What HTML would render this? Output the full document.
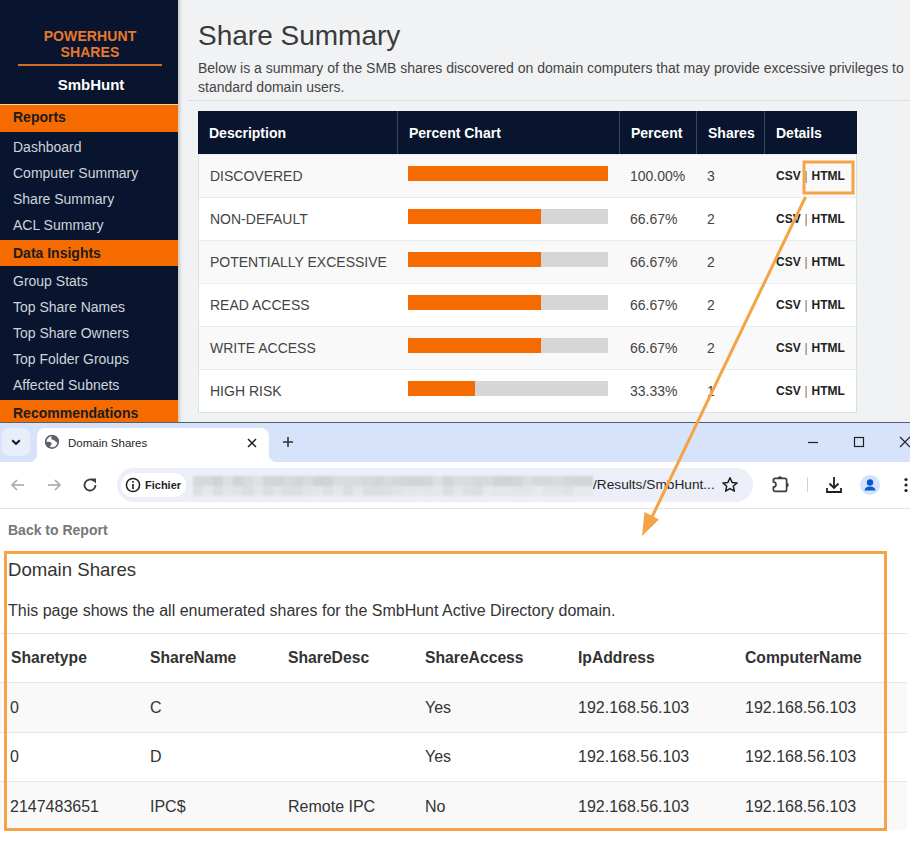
<!DOCTYPE html>
<html><head><meta charset="utf-8">
<style>
*{margin:0;padding:0;box-sizing:border-box}
html,body{width:910px;height:844px;overflow:hidden;background:#fff;font-family:"Liberation Sans",sans-serif}
.abs{position:absolute}
#top{position:absolute;left:0;top:0;width:910px;height:423px;background:#f1f2f4;overflow:hidden}
#side{position:absolute;left:0;top:0;width:178px;height:423px;background:#09152e}
#side .brand{position:absolute;left:1px;width:178px;letter-spacing:0.1px;text-align:center;color:#e8782a;font-weight:bold;font-size:14px;line-height:16px}
#side .hr{position:absolute;left:18px;top:64px;width:144px;height:2px;background:#cf6f2e}
#side .dom{position:absolute;left:2px;top:76px;width:178px;text-align:center;color:#fff;font-weight:bold;font-size:15px;line-height:18px}
#side .sec{position:absolute;left:0;width:178px;height:28px;background:#f56b00;color:#1c1c1c;font-weight:bold;font-size:14px;padding-left:13px;line-height:28px}
#side .it{position:absolute;left:13px;color:#cfd4dc;font-size:14px;line-height:18px;white-space:nowrap}
#shadow{position:absolute;left:178px;top:0;width:6px;height:422px;background:linear-gradient(to right,#c6c7c9 0,#dedfe1 2px,#eeeff1 4px,#f1f2f4 6px)}
h1{position:absolute;left:198px;top:19px;font-size:28px;font-weight:normal;color:#3a3a3a;line-height:34px;white-space:nowrap}
.desc{position:absolute;left:198px;top:59px;font-size:14px;color:#444;line-height:19px;width:720px}
.hline{position:absolute;left:188px;top:100px;width:722px;height:1px;background:#dcdcdc}
#tbl{position:absolute;left:198px;top:111px;width:659px;height:302px;background:#fff;border-bottom:1px solid #d6e4e2}
.th{position:absolute;top:0;height:43px;background:#09152e;color:#fff;font-weight:bold;font-size:14px;line-height:43px;padding-top:1px;padding-left:11px;border-left:1px solid #3a4656}
.row{position:absolute;left:0;width:659px;height:43px;border-top:1px solid #e8eeee;border-left:1px solid #d6e4e2;border-right:1px solid #d6e4e2}
.cell{position:absolute;top:0;line-height:42px;font-size:14px;color:#444;white-space:nowrap}
.bar{position:absolute;left:209px;top:11px;width:200px;height:15px;background:#d6d6d6}
.bar i{display:block;height:15px;background:#f56b00}
.det{font-weight:bold;font-size:12px;color:#222}

#br{position:absolute;left:0;top:422px;width:910px;height:422px;background:#fff;overflow:hidden}
#tabs{position:absolute;left:0;top:1px;width:910px;height:39px;background:#d6e3fa}
#tline{position:absolute;left:0;top:0;width:910px;height:1px;background:#585e69}
.ico{position:absolute}
#tool{position:absolute;left:0;top:40px;width:910px;height:47px;background:#fff;border-bottom:1px solid #e3e3e3}
#pill{position:absolute;left:117px;top:6px;width:636px;height:34px;border-radius:17px;background:#eceff7}
#chip{position:absolute;left:4px;top:5px;width:65px;height:24px;border-radius:12px;background:#fff}
.pg{position:absolute;color:#333;white-space:nowrap}
#bt{position:absolute;left:0;width:907px}
.brow{position:absolute;left:0;width:907px;border-top:1px solid #e6e6e6}
.bc{position:absolute;font-size:16px;color:#333;white-space:nowrap}
</style></head><body>
<div id="top">
  <div id="side">
    <div class="brand" style="top:28px">POWERHUNT</div>
    <div class="brand" style="top:44px">SHARES</div>
    <div class="hr"></div>
    <div class="dom">SmbHunt</div>
    <div class="sec" style="top:104px;border-top:1px solid #f7d7a8;line-height:25px">Reports</div>
    <div class="it" style="top:138px">Dashboard</div>
    <div class="it" style="top:164px">Computer Summary</div>
    <div class="it" style="top:190px">Share Summary</div>
    <div class="it" style="top:216px">ACL Summary</div>
    <div class="sec" style="top:240px;height:26px;line-height:26px">Data Insights</div>
    <div class="it" style="top:272px">Group Stats</div>
    <div class="it" style="top:298px">Top Share Names</div>
    <div class="it" style="top:324px">Top Share Owners</div>
    <div class="it" style="top:350px">Top Folder Groups</div>
    <div class="it" style="top:376px">Affected Subnets</div>
    <div class="sec" style="top:400px;height:23px;line-height:26px">Recommendations</div>
  </div>
  <div id="shadow"></div>
  <h1>Share Summary</h1>
  <div class="desc">Below is a summary of the SMB shares discovered on domain computers that may provide excessive privileges to standard domain users.</div>
  <div class="hline"></div>
  <div id="tbl">
    <div class="th" style="left:0;width:199px;border-left:none">Description</div>
    <div class="th" style="left:199px;width:222px">Percent Chart</div>
    <div class="th" style="left:421px;width:77px">Percent</div>
    <div class="th" style="left:498px;width:68px">Shares</div>
    <div class="th" style="left:566px;width:93px">Details</div>
    <div class="row" style="top:43px;background:#f9f9f9">
      <div class="cell" style="left:11px">DISCOVERED</div>
      <div class="bar"><i style="width:200px"></i></div>
      <div class="cell" style="left:431px">100.00%</div>
      <div class="cell" style="left:508px">3</div>
      <div class="cell det" style="left:577px">CSV <span style="font-weight:normal;color:#8a6a48;padding:0 0.5px">|</span> HTML</div>
    </div>
    <div class="row" style="top:86px;background:#fff">
      <div class="cell" style="left:11px">NON-DEFAULT</div>
      <div class="bar"><i style="width:133px"></i></div>
      <div class="cell" style="left:431px">66.67%</div>
      <div class="cell" style="left:508px">2</div>
      <div class="cell det" style="left:577px">CSV <span style="font-weight:normal;color:#8a6a48;padding:0 0.5px">|</span> HTML</div>
    </div>
    <div class="row" style="top:129px;background:#f9f9f9">
      <div class="cell" style="left:11px">POTENTIALLY EXCESSIVE</div>
      <div class="bar"><i style="width:133px"></i></div>
      <div class="cell" style="left:431px">66.67%</div>
      <div class="cell" style="left:508px">2</div>
      <div class="cell det" style="left:577px">CSV <span style="font-weight:normal;color:#8a6a48;padding:0 0.5px">|</span> HTML</div>
    </div>
    <div class="row" style="top:172px;background:#fff">
      <div class="cell" style="left:11px">READ ACCESS</div>
      <div class="bar"><i style="width:133px"></i></div>
      <div class="cell" style="left:431px">66.67%</div>
      <div class="cell" style="left:508px">2</div>
      <div class="cell det" style="left:577px">CSV <span style="font-weight:normal;color:#8a6a48;padding:0 0.5px">|</span> HTML</div>
    </div>
    <div class="row" style="top:215px;background:#f9f9f9">
      <div class="cell" style="left:11px">WRITE ACCESS</div>
      <div class="bar"><i style="width:133px"></i></div>
      <div class="cell" style="left:431px">66.67%</div>
      <div class="cell" style="left:508px">2</div>
      <div class="cell det" style="left:577px">CSV <span style="font-weight:normal;color:#8a6a48;padding:0 0.5px">|</span> HTML</div>
    </div>
    <div class="row" style="top:258px;background:#fff">
      <div class="cell" style="left:11px">HIGH RISK</div>
      <div class="bar"><i style="width:67px"></i></div>
      <div class="cell" style="left:431px">33.33%</div>
      <div class="cell" style="left:508px">1</div>
      <div class="cell det" style="left:577px">CSV <span style="font-weight:normal;color:#8a6a48;padding:0 0.5px">|</span> HTML</div>
    </div>
  </div>
</div>
<div id="br">
  <div id="tline"></div>
  <div id="tabs">
    <div class="ico" style="left:2px;top:5px;width:28px;height:28px;border-radius:8px;background:#e9effa"></div>
    <svg class="ico" style="left:9px;top:12px" width="14" height="14" viewBox="0 0 14 14"><path d="M3.2 5.2 L7 8.8 L10.8 5.2" fill="none" stroke="#0f1a2e" stroke-width="2"/></svg>
    <div class="ico" style="left:37px;top:5px;width:232px;height:34px;border-radius:8px 8px 0 0;background:#fff"></div>
    <div class="ico" style="left:29px;top:31px;width:8px;height:8px;background:radial-gradient(circle at 0 0,#d6e3fa 8px,#fff 8.5px)"></div>
    <div class="ico" style="left:269px;top:31px;width:8px;height:8px;background:radial-gradient(circle at 8px 0,#d6e3fa 8px,#fff 8.5px)"></div>
    <svg class="ico" style="left:44px;top:11px" width="16" height="16" viewBox="0 0 16 16"><circle cx="8" cy="7.8" r="6.3" fill="none" stroke="#5f6368" stroke-width="1.7"/><path d="M8.6 1.6 C7.6 2.7 7 3.9 7.3 5.1 C7.9 6 9.4 5.9 10.4 6.6 C11.4 7.3 11.8 8.3 12.6 8.4 L14.6 8 L14.6 5 L12 2.2 Z" fill="#5f6368"/><path d="M1.4 8.2 C3.4 7.7 6 7.7 7.3 8.6 C8 9.4 7.6 10.7 6.6 11.5 C6 12.2 6 13.4 6.3 14.4 L3 13 L1.4 10.5 Z" fill="#5f6368"/></svg>
    <div class="pg" style="left:68px;top:13px;font-size:11.5px;line-height:14px;color:#1f1f1f">Domain Shares</div>
    <svg class="ico" style="left:247px;top:15px" width="10" height="10" viewBox="0 0 10 10"><path d="M1 1 L9 9 M9 1 L1 9" stroke="#1f1f1f" stroke-width="1.5"/></svg>
    <svg class="ico" style="left:282px;top:13px" width="12" height="12" viewBox="0 0 12 12"><path d="M6 1 V11 M1 6 H11" stroke="#333" stroke-width="1.6"/></svg>
    <svg class="ico" style="left:807px;top:13px" width="12" height="12" viewBox="0 0 12 12"><path d="M1 6.5 H11" stroke="#1f1f1f" stroke-width="1.2"/></svg>
    <svg class="ico" style="left:853px;top:13px" width="12" height="12" viewBox="0 0 12 12"><rect x="1.5" y="1.5" width="9" height="9" fill="none" stroke="#1f1f1f" stroke-width="1.2"/></svg>
    <svg class="ico" style="left:899px;top:13px" width="12" height="12" viewBox="0 0 12 12"><path d="M1 1 L11 11 M11 1 L1 11" stroke="#1f1f1f" stroke-width="1.2"/></svg>
  </div>
  <div id="tool">
    <svg class="ico" style="left:10px;top:15px" width="16" height="16" viewBox="0 0 16 16"><path d="M14 8 H2.5 M7 3 L2 8 L7 13" fill="none" stroke="#a3a6aa" stroke-width="1.5"/></svg>
    <svg class="ico" style="left:46px;top:15px" width="16" height="16" viewBox="0 0 16 16"><path d="M2 8 H13.5 M9 3 L14 8 L9 13" fill="none" stroke="#a3a6aa" stroke-width="1.5"/></svg>
    <svg class="ico" style="left:82px;top:15px" width="16" height="16" viewBox="0 0 16 16"><path d="M13.5 8 A5.5 5.5 0 1 1 11.9 4.1" fill="none" stroke="#3c3c3c" stroke-width="1.8"/><path d="M9 1.5 H14 V6.5 Z" fill="#3c3c3c"/></svg>
    <div id="pill">
      <div id="chip"></div>
      <svg class="ico" style="left:8px;top:9px" width="16" height="16" viewBox="0 0 16 16"><circle cx="8" cy="8" r="6.6" fill="none" stroke="#1f1f1f" stroke-width="1.5"/><rect x="7.2" y="7" width="1.6" height="5" fill="#1f1f1f"/><rect x="7.2" y="4" width="1.6" height="1.7" fill="#1f1f1f"/></svg>
      <div class="pg" style="left:28px;top:10px;font-size:12px;line-height:14px;font-weight:bold;color:#1f1f1f;font-size:11px">Fichier</div>
      <div class="ico" style="left:76px;top:8px;width:400px;height:20px;filter:blur(1px)"><div class="ico" style="left:0px;top:0px;width:10px;height:10px;background:rgb(213,215,219)"></div><div class="ico" style="left:0px;top:10px;width:10px;height:10px;background:rgb(222,223,227)"></div><div class="ico" style="left:10px;top:0px;width:10px;height:10px;background:rgb(214,216,220)"></div><div class="ico" style="left:10px;top:10px;width:10px;height:10px;background:rgb(230,231,235)"></div><div class="ico" style="left:20px;top:0px;width:10px;height:10px;background:rgb(208,210,214)"></div><div class="ico" style="left:20px;top:10px;width:10px;height:10px;background:rgb(221,222,226)"></div><div class="ico" style="left:30px;top:0px;width:10px;height:10px;background:rgb(221,223,227)"></div><div class="ico" style="left:30px;top:10px;width:10px;height:10px;background:rgb(228,229,233)"></div><div class="ico" style="left:40px;top:0px;width:10px;height:10px;background:rgb(209,211,215)"></div><div class="ico" style="left:40px;top:10px;width:10px;height:10px;background:rgb(225,226,230)"></div><div class="ico" style="left:50px;top:0px;width:10px;height:10px;background:rgb(217,219,223)"></div><div class="ico" style="left:50px;top:10px;width:10px;height:10px;background:rgb(220,221,225)"></div><div class="ico" style="left:60px;top:0px;width:10px;height:10px;background:rgb(222,224,228)"></div><div class="ico" style="left:60px;top:10px;width:10px;height:10px;background:rgb(228,229,233)"></div><div class="ico" style="left:70px;top:0px;width:10px;height:10px;background:rgb(211,213,217)"></div><div class="ico" style="left:70px;top:10px;width:10px;height:10px;background:rgb(220,221,225)"></div><div class="ico" style="left:80px;top:0px;width:10px;height:10px;background:rgb(209,211,215)"></div><div class="ico" style="left:80px;top:10px;width:10px;height:10px;background:rgb(226,227,231)"></div><div class="ico" style="left:90px;top:0px;width:10px;height:10px;background:rgb(214,216,220)"></div><div class="ico" style="left:90px;top:10px;width:10px;height:10px;background:rgb(221,222,226)"></div><div class="ico" style="left:100px;top:0px;width:10px;height:10px;background:rgb(211,213,217)"></div><div class="ico" style="left:100px;top:10px;width:10px;height:10px;background:rgb(221,222,226)"></div><div class="ico" style="left:110px;top:0px;width:10px;height:10px;background:rgb(216,218,222)"></div><div class="ico" style="left:110px;top:10px;width:10px;height:10px;background:rgb(226,227,231)"></div><div class="ico" style="left:120px;top:0px;width:10px;height:10px;background:rgb(208,210,214)"></div><div class="ico" style="left:120px;top:10px;width:10px;height:10px;background:rgb(229,230,234)"></div><div class="ico" style="left:130px;top:0px;width:10px;height:10px;background:rgb(209,211,215)"></div><div class="ico" style="left:130px;top:10px;width:10px;height:10px;background:rgb(223,224,228)"></div><div class="ico" style="left:140px;top:0px;width:10px;height:10px;background:rgb(218,220,224)"></div><div class="ico" style="left:140px;top:10px;width:10px;height:10px;background:rgb(230,231,235)"></div><div class="ico" style="left:150px;top:0px;width:10px;height:10px;background:rgb(217,219,223)"></div><div class="ico" style="left:150px;top:10px;width:10px;height:10px;background:rgb(220,221,225)"></div><div class="ico" style="left:160px;top:0px;width:10px;height:10px;background:rgb(217,219,223)"></div><div class="ico" style="left:160px;top:10px;width:10px;height:10px;background:rgb(229,230,234)"></div><div class="ico" style="left:170px;top:0px;width:10px;height:10px;background:rgb(214,216,220)"></div><div class="ico" style="left:170px;top:10px;width:10px;height:10px;background:rgb(220,221,225)"></div><div class="ico" style="left:180px;top:0px;width:10px;height:10px;background:rgb(211,213,217)"></div><div class="ico" style="left:180px;top:10px;width:10px;height:10px;background:rgb(220,221,225)"></div><div class="ico" style="left:190px;top:0px;width:10px;height:10px;background:rgb(216,218,222)"></div><div class="ico" style="left:190px;top:10px;width:10px;height:10px;background:rgb(222,223,227)"></div><div class="ico" style="left:200px;top:0px;width:10px;height:10px;background:rgb(212,214,218)"></div><div class="ico" style="left:200px;top:10px;width:10px;height:10px;background:rgb(226,227,231)"></div><div class="ico" style="left:210px;top:0px;width:10px;height:10px;background:rgb(210,212,216)"></div><div class="ico" style="left:210px;top:10px;width:10px;height:10px;background:rgb(228,229,233)"></div><div class="ico" style="left:220px;top:0px;width:10px;height:10px;background:rgb(209,211,215)"></div><div class="ico" style="left:220px;top:10px;width:10px;height:10px;background:rgb(229,230,234)"></div><div class="ico" style="left:230px;top:0px;width:10px;height:10px;background:rgb(212,214,218)"></div><div class="ico" style="left:230px;top:10px;width:10px;height:10px;background:rgb(228,229,233)"></div><div class="ico" style="left:240px;top:0px;width:10px;height:10px;background:rgb(221,223,227)"></div><div class="ico" style="left:240px;top:10px;width:10px;height:10px;background:rgb(230,231,235)"></div><div class="ico" style="left:250px;top:0px;width:10px;height:10px;background:rgb(210,212,216)"></div><div class="ico" style="left:250px;top:10px;width:10px;height:10px;background:rgb(221,222,226)"></div><div class="ico" style="left:260px;top:0px;width:10px;height:10px;background:rgb(217,219,223)"></div><div class="ico" style="left:260px;top:10px;width:10px;height:10px;background:rgb(229,230,234)"></div><div class="ico" style="left:270px;top:0px;width:10px;height:10px;background:rgb(218,220,224)"></div><div class="ico" style="left:270px;top:10px;width:10px;height:10px;background:rgb(223,224,228)"></div><div class="ico" style="left:280px;top:0px;width:10px;height:10px;background:rgb(213,215,219)"></div><div class="ico" style="left:280px;top:10px;width:10px;height:10px;background:rgb(221,222,226)"></div><div class="ico" style="left:290px;top:0px;width:10px;height:10px;background:rgb(216,218,222)"></div><div class="ico" style="left:290px;top:10px;width:10px;height:10px;background:rgb(231,232,236)"></div><div class="ico" style="left:300px;top:0px;width:10px;height:10px;background:rgb(209,211,215)"></div><div class="ico" style="left:300px;top:10px;width:10px;height:10px;background:rgb(229,230,234)"></div><div class="ico" style="left:310px;top:0px;width:10px;height:10px;background:rgb(208,210,214)"></div><div class="ico" style="left:310px;top:10px;width:10px;height:10px;background:rgb(229,230,234)"></div><div class="ico" style="left:320px;top:0px;width:10px;height:10px;background:rgb(211,213,217)"></div><div class="ico" style="left:320px;top:10px;width:10px;height:10px;background:rgb(227,228,232)"></div><div class="ico" style="left:330px;top:0px;width:10px;height:10px;background:rgb(218,220,224)"></div><div class="ico" style="left:330px;top:10px;width:10px;height:10px;background:rgb(228,229,233)"></div><div class="ico" style="left:340px;top:0px;width:10px;height:10px;background:rgb(214,216,220)"></div><div class="ico" style="left:340px;top:10px;width:10px;height:10px;background:rgb(232,233,237)"></div><div class="ico" style="left:350px;top:0px;width:10px;height:10px;background:rgb(213,215,219)"></div><div class="ico" style="left:350px;top:10px;width:10px;height:10px;background:rgb(227,228,232)"></div><div class="ico" style="left:360px;top:0px;width:10px;height:10px;background:rgb(217,219,223)"></div><div class="ico" style="left:360px;top:10px;width:10px;height:10px;background:rgb(227,228,232)"></div><div class="ico" style="left:370px;top:0px;width:10px;height:10px;background:rgb(213,215,219)"></div><div class="ico" style="left:370px;top:10px;width:10px;height:10px;background:rgb(224,225,229)"></div><div class="ico" style="left:380px;top:0px;width:10px;height:10px;background:rgb(211,213,217)"></div><div class="ico" style="left:380px;top:10px;width:10px;height:10px;background:rgb(232,233,237)"></div><div class="ico" style="left:390px;top:0px;width:10px;height:10px;background:rgb(210,212,216)"></div><div class="ico" style="left:390px;top:10px;width:10px;height:10px;background:rgb(231,232,236)"></div></div>
      
      <div class="pg" style="left:476px;top:9px;font-size:13.7px;line-height:16px;color:#1f1f1f">/Results/SmbHunt...</div>
      <svg class="ico" style="left:604px;top:8px" width="18" height="18" viewBox="0 0 18 18"><path d="M9 1.8 L11.1 6.4 L16.1 6.9 L12.3 10.2 L13.4 15.2 L9 12.6 L4.6 15.2 L5.7 10.2 L1.9 6.9 L6.9 6.4 Z" fill="none" stroke="#1f1f1f" stroke-width="1.5" stroke-linejoin="round"/></svg>
    </div>
    <svg class="ico" style="left:772px;top:13px" width="18" height="18" viewBox="0 0 18 18"><path d="M3.1 3.3 H12.9 Q14.6 3.3 14.6 5 V14.7 Q14.6 16.4 12.9 16.4 H3.1 Q1.4 16.4 1.4 14.7 V12.2 A2.6 2.6 0 0 0 1.4 7 V5 Q1.4 3.3 3.1 3.3 Z" fill="none" stroke="#3c3c3c" stroke-width="1.7"/><path d="M5.7 3.4 A2.2 2.2 0 0 1 10.1 3.4 Z M14.5 7.7 A2.2 2.2 0 0 1 14.5 12.1 Z" fill="#3c3c3c"/></svg>
    <div class="ico" style="left:807px;top:15px;width:1px;height:15px;background:#c7d3e6"></div>
    <svg class="ico" style="left:824px;top:13px" width="20" height="20" viewBox="0 0 20 20"><path d="M10 2 V13 M5.5 8.5 L10 13 L14.5 8.5 M3 13 V17 H17 V13" fill="none" stroke="#1f1f1f" stroke-width="1.8"/></svg>
    <div class="ico" style="left:860px;top:13px;width:20px;height:20px;border-radius:10px;background:#d3e3fd"></div>
    <svg class="ico" style="left:860px;top:13px" width="20" height="20" viewBox="0 0 20 20"><circle cx="10" cy="7.5" r="3.2" fill="#0b57d0"/><path d="M4.5 15.5 C5 12 8 11.5 10 11.5 C12 11.5 15 12 15.5 15.5 Z" fill="#0b57d0"/></svg>
    <svg class="ico" style="left:901px;top:13px" width="10" height="20" viewBox="0 0 10 20"><circle cx="5" cy="4.5" r="1.6" fill="#1f1f1f"/><circle cx="5" cy="10" r="1.6" fill="#1f1f1f"/><circle cx="5" cy="15.5" r="1.6" fill="#1f1f1f"/></svg>
  </div>
  <div class="pg" style="left:8px;top:100px;font-size:14px;line-height:16px;font-weight:bold;color:#777">Back to Report</div>
  <div class="pg" style="left:8px;top:137px;font-size:18.6px;line-height:22px;color:#333">Domain Shares</div>
  <div class="pg" style="left:8px;top:179px;font-size:16px;line-height:20px;color:#333">This page shows the all enumerated shares for the SmbHunt Active Directory domain.</div>
  <div class="brow" style="top:211px;height:50px;background:#fff"></div>
  <div class="bc" style="left:11px;top:227px;line-height:18px;font-weight:bold;font-size:15.7px">Sharetype</div>
  <div class="bc" style="left:150px;top:227px;line-height:18px;font-weight:bold;font-size:15.7px">ShareName</div>
  <div class="bc" style="left:288px;top:227px;line-height:18px;font-weight:bold;font-size:15.7px">ShareDesc</div>
  <div class="bc" style="left:425px;top:227px;line-height:18px;font-weight:bold;font-size:15.7px">ShareAccess</div>
  <div class="bc" style="left:578px;top:227px;line-height:18px;font-weight:bold;font-size:15.7px">IpAddress</div>
  <div class="bc" style="left:745px;top:227px;line-height:18px;font-weight:bold;font-size:15.7px">ComputerName</div>
  <div class="brow" style="top:260px;height:50px;background:#f9f9f9"></div>
  <div class="bc" style="left:10px;top:277px;line-height:18px">0</div>
  <div class="bc" style="left:150px;top:277px;line-height:18px">C</div>
  <div class="bc" style="left:425px;top:277px;line-height:18px">Yes</div>
  <div class="bc" style="left:578px;top:277px;line-height:18px">192.168.56.103</div>
  <div class="bc" style="left:745px;top:277px;line-height:18px">192.168.56.103</div>
  <div class="brow" style="top:310px;height:49px;background:#fff"></div>
  <div class="bc" style="left:10px;top:326px;line-height:18px">0</div>
  <div class="bc" style="left:150px;top:326px;line-height:18px">D</div>
  <div class="bc" style="left:425px;top:326px;line-height:18px">Yes</div>
  <div class="bc" style="left:578px;top:326px;line-height:18px">192.168.56.103</div>
  <div class="bc" style="left:745px;top:326px;line-height:18px">192.168.56.103</div>
  <div class="brow" style="top:359px;height:49px;background:#f9f9f9"></div>
  <div class="bc" style="left:10px;top:376px;line-height:18px">2147483651</div>
  <div class="bc" style="left:150px;top:376px;line-height:18px">IPC$</div>
  <div class="bc" style="left:288px;top:376px;line-height:18px">Remote IPC</div>
  <div class="bc" style="left:425px;top:376px;line-height:18px">No</div>
  <div class="bc" style="left:578px;top:376px;line-height:18px">192.168.56.103</div>
  <div class="bc" style="left:745px;top:376px;line-height:18px">192.168.56.103</div>
  <div class="ico" style="left:4px;top:129px;width:883px;height:280px;border:3px solid #f5a346"></div>
</div>
<svg class="abs" style="left:0;top:0" width="910" height="844" viewBox="0 0 910 844">
  <rect x="804" y="162" width="49" height="31" fill="none" stroke="#f5a346" stroke-width="3"/>
  <path d="M805.5 197 L652 517" stroke="#f5a346" stroke-width="3" fill="none"/>
  <path d="M644.5 512 L659 519.5 L642 536 Z" fill="#f5a346"/>
</svg>
</body></html>
